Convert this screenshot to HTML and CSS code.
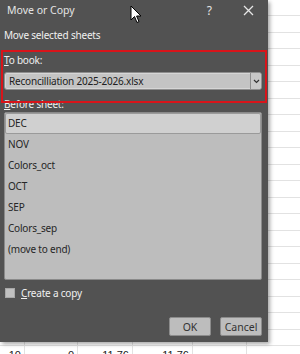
FILE: index.html
```html
<!DOCTYPE html>
<html lang="en">
<head>
    <meta charset="UTF-8">
    <title>Move or Copy</title>
    <link rel="stylesheet" href="styles.css">
</head>
<body>
    <div class="sheet">
        <div class="row"><span></span><span></span><span></span><span></span><span></span><span></span></div>
        <div class="row"><span></span><span></span><span></span><span></span><span></span><span></span></div>
        <div class="row"><span></span><span></span><span></span><span></span><span></span><span></span></div>
        <div class="row"><span></span><span></span><span></span><span></span><span></span><span></span></div>
        <div class="row"><span></span><span></span><span></span><span></span><span></span><span></span></div>
        <div class="row"><span></span><span></span><span></span><span></span><span></span><span></span></div>
        <div class="row"><span></span><span></span><span></span><span></span><span></span><span></span></div>
        <div class="row"><span></span><span></span><span></span><span></span><span></span><span></span></div>
        <div class="row"><span></span><span></span><span></span><span></span><span></span><span></span></div>
        <div class="row"><span></span><span></span><span></span><span></span><span></span><span></span></div>
        <div class="row"><span></span><span></span><span></span><span></span><span></span><span></span></div>
        <div class="row"><span></span><span></span><span></span><span></span><span></span><span></span></div>
        <div class="row"><span></span><span></span><span></span><span></span><span></span><span></span></div>
        <div class="row"><span></span><span></span><span></span><span></span><span></span><span></span></div>
        <div class="row"><span></span><span></span><span></span><span></span><span></span><span></span></div>
        <div class="row"><span></span><span></span><span></span><span></span><span></span><span></span></div>
        <div class="row"><span></span><span></span><span></span><span></span><span></span><span></span></div>
        <div class="row"><span></span><span></span><span></span><span></span><span></span><span></span></div>
        <div class="row"><span></span><span></span><span></span><span></span><span></span><span></span></div>
        <div class="row"><span></span><span></span><span></span><span></span><span></span><span></span></div>
        <div class="row"><span></span><span></span><span></span><span></span><span></span><span></span></div>
        <div class="row"><span>10</span><span>0</span><span>11.76</span><span>11.76</span><span></span><span></span></div>
    </div>

    <div class="dialog">
        <div class="titlebar">
            <span class="title">Move or Copy</span>
            <span class="help">?</span>
            <svg class="close" width="11" height="11" viewBox="0 0 11 11">
                <path d="M1 1 L10 10 M10 1 L1 10" stroke="#e6e6e6" stroke-width="1.3" fill="none"/>
            </svg>
        </div>

        <div class="caption">Move selected sheets</div>

        <div class="label"><u>T</u>o book:</div>
        <div class="select">
            <span class="select-value">Reconcilliation 2025-2026.xlsx</span>
            <span class="select-btn">
                <svg width="7" height="5" viewBox="0 0 7 5">
                    <path d="M1 1 L3.5 3.5 L6 1" stroke="#333" stroke-width="1.2" fill="none"/>
                </svg>
            </span>
        </div>

        <div class="label"><u>B</u>efore sheet:</div>
        <ul class="sheet-list">
            <li class="selected">DEC</li>
            <li>NOV</li>
            <li>Colors_oct</li>
            <li>OCT</li>
            <li>SEP</li>
            <li>Colors_sep</li>
            <li>(move to end)</li>
        </ul>

        <label class="check">
            <span class="box"></span>
            <span><u>C</u>reate a copy</span>
        </label>

        <div class="buttons">
            <button class="btn">OK</button>
            <button class="btn">Cancel</button>
        </div>

        <div class="highlight"></div>
    </div>

    <svg class="cursor" width="12" height="19" viewBox="0 0 12 19">
        <path d="M1 1 L1 15 L4.5 11.5 L7 17.5 L9 16.6 L6.6 11 L11 11 Z" fill="#fff" stroke="#000" stroke-width="1"/>
    </svg>
</body>
</html>
```

FILE: styles.css
```css
* {
    margin: 0;
    padding: 0;
    box-sizing: border-box;
}

body {
    width: 300px;
    height: 354px;
    overflow: hidden;
    background: #fff;
    font-family: 'Noto Sans', 'Open Sans', sans-serif;
    position: relative;
}

/* spreadsheet behind the dialog */
.sheet {
    margin-top: -0.5px;
}

.row {
    height: 16.5px;
    display: grid;
    grid-template-columns: 25px 53px 55px 60px 54px 1fr;
    border-bottom: 1px solid #e2e2e2;
}

.row span {
    border-right: 1px solid #e2e2e2;
    font-family: 'Liberation Sans', sans-serif;
    font-size: 11px;
    color: #222;
    text-align: right;
    padding: 3px 3px 0 0;
}

.row span:last-child {
    border-right: none;
}

/* dialog */
.dialog {
    position: absolute;
    left: 0;
    top: 0;
    width: 268px;
    height: 342px;
    background: #525252;
    box-shadow: 2px 2px 4px rgba(0, 0, 0, 0.35);
    padding: 0 6px 0 4px;
    color: #f0f0f0;
    font-size: 10px;
    letter-spacing: -0.2px;
}

.titlebar {
    height: 22px;
    display: flex;
    align-items: center;
    padding-left: 3px;
    padding-bottom: 2px;
    color: #e4e4e4;
    font-size: 10.5px;
    letter-spacing: 0;
}

.title {
    flex: 1;
}

.help {
    margin-right: 31px;
    font-size: 12px;
}

.close {
    margin-right: 8px;
}

.caption {
    margin-top: 6px;
    height: 14px;
    line-height: 14px;
}

.label {
    height: 14px;
    line-height: 14px;
    margin-top: 11px;
}

.label u {
    text-underline-offset: 1px;
}

.select {
    margin-top: 5px;
    height: 18px;
    display: flex;
    background: #c4c4c4;
    border: 1px solid #8e8e8e;
    border-radius: 3px;
    box-shadow: inset 0 0 0 1px #d6d6d6;
    color: #202020;
}

.select-value {
    flex: 1;
    line-height: 16px;
    padding-left: 4px;
}

.select-btn {
    width: 11px;
    display: flex;
    align-items: center;
    justify-content: center;
    border-left: 1px solid #8e8e8e;
    background: #c8c8c8;
    border-radius: 0 2px 2px 0;
}

.select + .label {
    margin-top: 7px;
}

.sheet-list {
    list-style: none;
    margin-top: 1px;
    height: 168px;
    background: #bdbdbd;
    border: 1px solid #8a8a8a;
    border-radius: 2px;
    color: #262626;
}

.sheet-list li {
    height: 21px;
    line-height: 18px;
    padding-left: 2px;
    border: 1px solid transparent;
}

.sheet-list li.selected {
    background: #d0d0d0;
    border-color: #9a9a9a;
    border-radius: 2px;
}

.check {
    display: flex;
    align-items: center;
    gap: 6px;
    margin-top: 6px;
    height: 14px;
    padding-left: 1px;
}

.box {
    width: 10px;
    height: 10px;
    background: #c0c0c0;
    border: 1px solid #a8a8a8;
}

.buttons {
    display: flex;
    justify-content: flex-end;
    gap: 9px;
    margin-top: 17px;
}

.btn {
    width: 42px;
    height: 19px;
    background: #bdbdbd;
    border: 1px solid #8c8c8c;
    border-radius: 2px;
    font-family: inherit;
    font-size: 10.5px;
    color: #333;
}

/* red annotation frame */
.highlight {
    position: absolute;
    left: 1px;
    top: 50px;
    width: 266px;
    height: 53px;
    border: 2px solid #d8141a;
}

.cursor {
    position: absolute;
    left: 130px;
    top: 5px;
}
```
